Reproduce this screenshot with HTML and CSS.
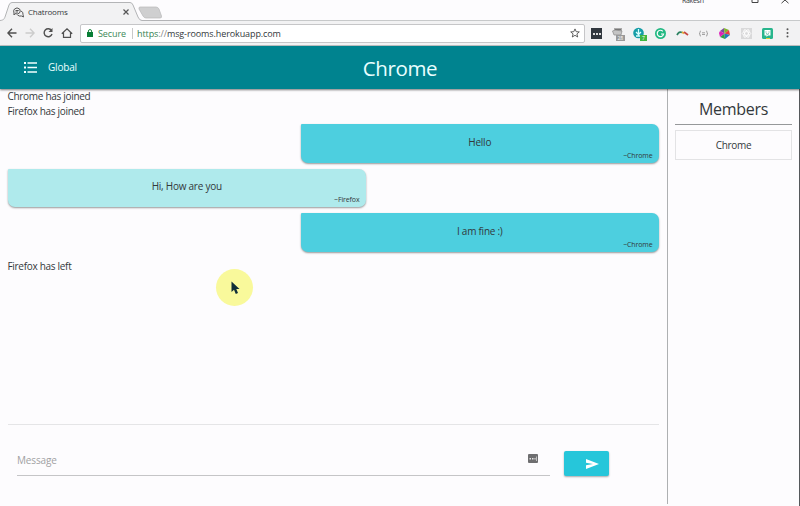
FILE: index.html
```html
<!DOCTYPE html>
<html lang="en">
<head>
<meta charset="utf-8">
<title>Chatrooms</title>
<link rel="stylesheet" href="styles.css">
</head>
<body>
<div class="window">
  <div class="tabs">
    <svg class="tab-shapes" width="180" height="21" viewBox="0 0 180 21">
      <path d="M0 20.5C4 20 4 19 5 17L9 5Q10 2.5 12 2.5H130Q132 2.5 133 5L138 17Q139.500 20.500 142 20.500V21H0z" fill="#f2f2f3"/>
      <path d="M0 20.5C4 20 4 19 5 17L9 5Q10 2.500 12 2.500H130Q132 2.500 133 5L138 17Q139.500 20.500 142 20.500H180" fill="none" stroke="#b3b4b6"/>
      <path d="M140 7H156Q158 7 159 9L161.500 16Q162 18 160 18H146Q144 18 143 16L139 9Q138.500 7 140 7z" fill="#cfcfd0" stroke="#b8b8b9" stroke-width=".7"/>
    </svg>
    <div class="tab">
      <svg width="11" height="11" viewBox="0 0 11 11" fill="none" stroke="#555" stroke-width="1"><path d="M2 6.700L1 8V6Q0 3.500 1.500 2Q4-.2 6.600 2Q8 4 6.500 6Q4.500 7.500 2 6.700zM8 4Q10.500 5 10 7.600L10.500 10L8.500 9Q6 9.500 4.500 8M2.500 3.500H5.700M2.500 5H5"/></svg>
      <span class="tab-title">Chatrooms</span>
      <svg class="tab-close" width="6" height="6" viewBox="0 0 6 6" stroke="#555" stroke-width="1.200"><path d="M.5 .5L5.500 5.500M5.500 .5L.5 5.500"/></svg>
    </div>
    <div class="controls">
      <span class="user">Rakesh</span>
      <svg width="8" height="4" viewBox="0 0 8 4" fill="none" stroke="#444"><path d="M1 0V2.500H7V0"/></svg>
      <svg width="8" height="4" viewBox="0 0 8 4" fill="none" stroke="#444"><path d="M.5 3.200L4 0L7.500 3.200"/></svg>
    </div>
  </div>
  <div class="toolbar">
    <div class="nav">
      <svg width="10" height="10" viewBox="0 0 10 10" fill="none" stroke="#505050" stroke-width="1.400"><path d="M9.500 5H1M5 .8L.9 5L5 9.200"/></svg>
      <svg width="10" height="10" viewBox="0 0 10 10" fill="none" stroke="#ccc" stroke-width="1.400"><path d="M.5 5H9M5 .8L9.100 5L5 9.200"/></svg>
      <svg width="10" height="10" viewBox="0 0 10 10" fill="none" stroke="#505050" stroke-width="1.400"><path d="M8.500 2.500A4 4 0 1 0 9 6"/><path d="M9.500 0V4H5.500z" fill="#505050" stroke="none"/></svg>
      <svg width="12" height="10" viewBox="0 0 12 10" fill="none" stroke="#505050" stroke-width="1.200"><path d="M.8 5.700L6 .8L11.200 5.700M2.500 4.500V9.300H9.500V4.500"/></svg>
    </div>
    <div class="address">
      <svg width="6" height="8" viewBox="0 0 6 8"><path d="M1.400 4V2Q1.500.6 3 .6T4.600 2V4" fill="none" stroke="#168039"/><path d="M0 3H6V8H0z" fill="#087e35"/></svg>
      <span class="secure">Secure</span>
      <span class="divider"></span>
      <span class="url"><span class="scheme">https</span><span class="slashes">://</span>msg-rooms.herokuapp.com</span>
      <svg class="star" width="10" height="10" viewBox="0 0 10 10" fill="none" stroke="#505050" stroke-width=".9"><path d="M5 .9L6.200 3.700L9.300 3.900L6.900 5.900L7.700 9L5 7.300L2.300 9L3.100 5.900L.7 3.900L3.800 3.700z"/></svg>
    </div>
    <div class="extensions">
      <svg width="15" height="15" viewBox="0 0 15 15"><path d="M2 2H13V13H2z" fill="#30373e"/><path d="M4 7H6V9H4zM7 7H9V9H7zM10 7H12V9H10z" fill="#ddd"/></svg>
      <svg width="15" height="15" viewBox="0 0 15 15"><path d="M4 2H12V5H4z" fill="#aaa"/><path d="M2.500 5L5 4L12 5L11 9H4z" fill="#c4c4c4" stroke="#8a8a8a" stroke-width=".7"/><path d="M5 3.500H11" stroke="#777"/><path d="M6 9H15V15H6z" fill="#999"/><text x="7.500" y="14.200" class="badge">28</text></svg>
      <svg width="15" height="15" viewBox="0 0 15 15"><circle cx="6.500" cy="7" r="5.300" fill="#169da7"/><path d="M6.500 3V8M4 6L6.500 8.500L9 6M4 10H8" fill="none" stroke="#d9ffff" stroke-width="1.300"/><path d="M8 9H15V15H8z" fill="#3fb63f"/><text x="10" y="14.200" class="badge">7</text></svg>
      <svg width="15" height="15" viewBox="0 0 15 15"><circle cx="7.500" cy="7.500" r="5.500" fill="#23b983"/><path d="M9.800 5.300A3.200 3.200 0 1 0 10.600 8H8" fill="none" stroke="#fff" stroke-width="1.200"/></svg>
      <svg width="15" height="15" viewBox="0 0 15 15" fill="none" stroke-width="1.700"><path d="M2 9Q4 5 7 6.500" stroke="#2a8060"/><path d="M7 6L9 7.500" stroke="#e4ad36"/><path d="M9 6L13 9" stroke="#c64843"/></svg>
      <svg width="15" height="15" viewBox="0 0 15 15" fill="none" stroke="#999" stroke-width=".9"><path d="M5 5Q3.800 5 4 6.300T3 7.500Q4 7.500 4 9T5 10M10 5Q11.200 5 11 6.300T12 7.500Q11 7.500 11 9T10 10M6 6.800H9M6 8.500H9"/></svg>
      <svg width="15" height="15" viewBox="0 0 15 15"><path d="M7.500 7.500L3 5L7 2z" fill="#7d4c9b"/><path d="M7.500 7.500L7 2L12 4z" fill="#81b52c"/><path d="M7.500 7.500L12 4L13 9z" fill="#e83e43"/><path d="M7.500 7.500L13 9L8 13z" fill="#2578ba"/><path d="M7.500 7.500L8 13L3 11z" fill="#2c9f47"/><path d="M7.500 7.500L3 11L2 7L3 5z" fill="#dc21b9"/></svg>
      <svg width="15" height="15" viewBox="0 0 15 15"><path d="M2 2H13V13H2z" fill="#d9d9da"/><g fill="none" stroke="#fff" stroke-width=".8"><ellipse cx="7.500" cy="7.500" rx="4.300" ry="1.800"/><ellipse cx="7.500" cy="7.500" rx="4.300" ry="1.800" transform="rotate(60 7.500 7.500)"/><ellipse cx="7.500" cy="7.500" rx="4.300" ry="1.800" transform="rotate(120 7.500 7.500)"/></g></svg>
      <svg width="15" height="15" viewBox="0 0 15 15"><rect x="2" y="2" width="11" height="11" rx="1.500" fill="#28b58c"/><path d="M4.500 4H10.500V9.500H8L6.500 11V9.500H4.500z" fill="#fff"/><path d="M6 5.500V6.500M9 5.500V6.500M6 7.600Q7.500 9 9 7.600" fill="none" stroke="#28a080" stroke-width=".8"/><path d="M6 12.500H10" stroke="#e4cc36"/></svg>
      <svg class="more" width="3" height="10" viewBox="0 0 3 10" fill="#555"><circle cx="1.500" cy="1.300" r="1"/><circle cx="1.500" cy="4.900" r="1"/><circle cx="1.500" cy="8.500" r="1"/></svg>
    </div>
  </div>
  <header class="app-header">
    <div class="room">
      <svg width="13" height="11" viewBox="0 0 13 11" fill="#f2ffff"><path d="M0 0H2V2H0zM0 4.500H2V6.500H0zM0 9H2V11H0zM3.500 .3H13V1.700H3.500zM3.500 4.800H13V6.200H3.500zM3.500 9.300H13V10.700H3.500z"/></svg>
      <span>Global</span>
    </div>
    <h1>Chrome</h1>
    <div></div>
  </header>
  <main class="content">
    <section class="chat">
      <div class="messages">
        <div class="notice joined">Chrome has joined</div>
        <div class="notice joined">Firefox has joined</div>
        <div class="bubble mine first"><p>Hello</p><small>~Chrome</small></div>
        <div class="bubble"><p>Hi, How are you</p><small>~Firefox</small></div>
        <div class="bubble mine"><p>I am fine :)</p><small>~Chrome</small></div>
        <div class="notice left">Firefox has left</div>
      </div>
      <div class="composer">
        <div class="field">
          <span>Message</span>
          <svg width="10" height="9" viewBox="0 0 10 9"><rect width="10" height="9" rx="1" fill="#6e6e70"/><path d="M1.500 4H3V5.500H1.500zM4 4H5.500V5.500H4zM6.500 4H7.500V5.500H6.500zM8 2.500H8.700V7H8z" fill="#e5e5e5"/></svg>
        </div>
        <button class="send" aria-label="Send"><svg width="13" height="10" viewBox="0 0 13 10"><path d="M0 0L13 5L0 10V6.200L7 5L0 3.800z" fill="#fff"/></svg></button>
      </div>
    </section>
    <aside class="members">
      <h2>Members</h2>
      <div class="member">Chrome</div>
    </aside>
  </main>
  <div class="pointer">
    <svg width="9" height="14" viewBox="0 0 9 14"><path d="M.5 .5V11L3 8.800L4.800 13L7 12L5.300 8H8.500z" fill="#102f38"/></svg>
  </div>
</div>
</body>
</html>
```
FILE: styles.css
```css
* { box-sizing: border-box; }
body { margin: 0; }
svg { display: block; flex: none; }
h1, h2, p { margin: 0; font-weight: 400; }
.window {
  position: relative;
  display: flex;
  flex-direction: column;
  width: 800px;
  height: 506px;
  overflow: hidden;
  background: #fdfcfe;
  color: #33383b;
  font: 10px/15px "Open Sans", "Noto Sans", sans-serif;
  letter-spacing: -.15px;
}
.tabs {
  position: relative;
  display: flex;
  justify-content: space-between;
  height: 21px;
  border-bottom: 1px solid #c7c9ca;
}
.tab-shapes { position: absolute; left: 0; top: 0; }
.tab {
  position: relative;
  display: flex;
  align-items: center;
  width: 129px;
  height: 21px;
  padding: 3px 0 0 13px;
  font-size: 8px;
}
.tab-title { margin: -1px 0 0 4px; letter-spacing: -.2px; }
.tab-close { margin-left: auto; }
.controls { display: flex; width: 118px; height: 4px; }
.controls svg:nth-of-type(1) { margin-left: 47px; }
.controls svg:nth-of-type(2) { margin-left: 22px; }
.user { width: 22px; height: 4px; font-size: 7px; line-height: 1px; letter-spacing: -.3px; }
.toolbar {
  display: flex;
  align-items: center;
  height: 25px;
  flex: none;
  background: #f2f2f3;
  border-bottom: 1px solid #c2c4c5;
}
.nav { display: flex; align-items: center; gap: 8px; width: 80px; padding-left: 7px; }
.address {
  display: flex;
  align-items: center;
  width: 505px;
  height: 19px;
  padding: 0 4px 0 6px;
  background: #fff;
  border: 1px solid #c6c6c8;
  border-radius: 2px;
  font-size: 9px;
}
.secure { width: 28px; margin-left: 5px; color: #3d8a58; letter-spacing: -.08px; }
.divider { width: 1px; height: 11px; margin: 0 4px 0 6px; background: #c9c9c9; }
.url { letter-spacing: -.1px; }
.scheme { color: #358151; }
.slashes { color: #888; }
.star { margin-left: auto; }
.extensions { display: flex; align-items: center; gap: 6.400px; padding-left: 4px; }
.badge { font: 5px "Open Sans", sans-serif; fill: #fff; }
.more { margin-left: 4.500px; }
.app-header {
  position: relative;
  display: grid;
  grid-template-columns: 1fr auto 1fr;
  align-items: center;
  flex: none;
  height: 43px;
  padding-left: 24px;
  padding-right: 24px;
  background: #00838f;
  box-shadow: 0 1px 2px #0008;
  color: #eaffff;
}
.room { display: flex; align-items: center; gap: 11px; letter-spacing: -.2px; }
h1 { padding-top: 1px; font: 20.500px/40px "Open Sans", sans-serif; letter-spacing: -.4px; }
.content { display: flex; flex: 1; min-height: 0; border-right: 1px solid #55585b; }
.chat {
  display: flex;
  flex-direction: column;
  width: 668px;
  height: 415px;
  padding: 0 8px 0 7.500px;
  border-right: 1px solid #aeb0b2;
}
.messages { height: 336px; border-bottom: 1px solid #e5e5e7; }
.notice { height: 15px; letter-spacing: -.3px; }
.joined { height: 14.500px; }
.left { padding-top: 1px; }
.bubble {
  width: 358.500px;
  height: 38.500px;
  margin-bottom: 6px;
  padding: 10.500px 6.500px 0;
  background: #afeaec;
  border-radius: 1px 7px 7px 7px;
  box-shadow: 0 1px 2px #0006;
  text-align: center;
}
.bubble p { letter-spacing: -.25px; }
.mine { margin-left: auto; background: #4dcfdf; }
.first { margin-top: 6px; }
.bubble small { display: block; font-size: 7px; line-height: 11px; text-align: right; letter-spacing: -.12px; }
.composer { display: flex; padding: 26px 0 0 9.500px; }
.field {
  display: flex;
  justify-content: space-between;
  width: 533px;
  height: 25px;
  padding: 3px 12px 0 0;
  border-bottom: 1px solid #c5c5c7;
  color: #a1a1a3;
}
.field span { margin-top: -1px; }
.send {
  display: flex;
  align-items: center;
  width: 45px;
  height: 25px;
  margin-left: 14px;
  padding: 0 0 0 22px;
  border: 0;
  border-radius: 2px;
  background: #26c6da;
  box-shadow: 0 1px 2px #0005;
}
.members { flex: 1; padding: 8px 7px 0; text-align: center; }
h2 { height: 28px; border-bottom: 1px solid #96989a; font: 16px/25px "Open Sans", sans-serif; letter-spacing: -.3px; }
.member { height: 30px; margin-top: 5px; border: 1px solid #e3e3e5; line-height: 29px; letter-spacing: -.3px; }
.pointer {
  position: absolute;
  left: 216px;
  top: 269px;
  width: 37px;
  height: 37px;
  padding: 12px 0 0 15px;
  border-radius: 50%;
  background: #f9f99b;
}
```
